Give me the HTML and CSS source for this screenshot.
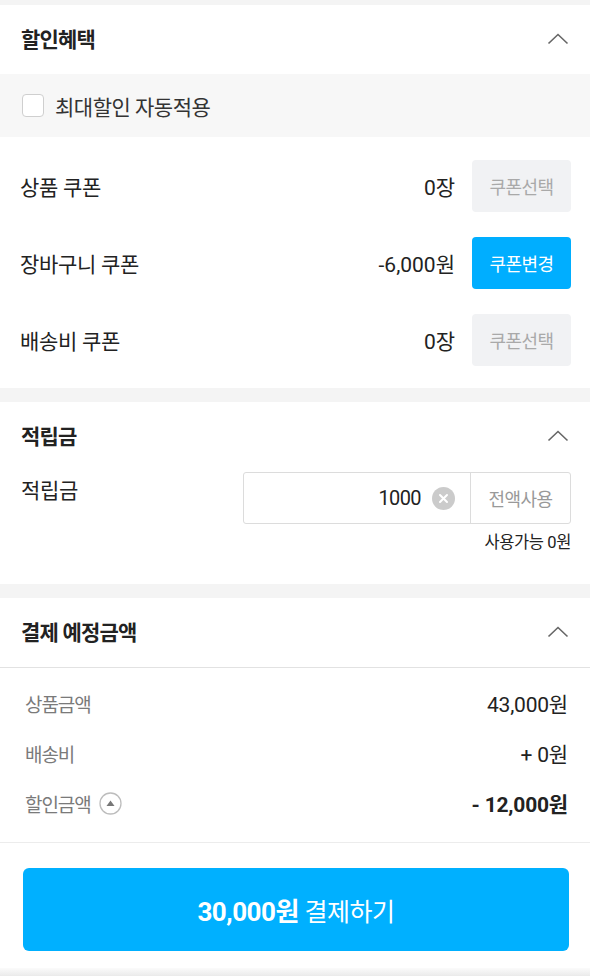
FILE: index.html
```html
<!DOCTYPE html>
<html lang="ko">
<head>
<meta charset="utf-8">
<link rel="stylesheet" href="styles.css">
</head>
<body>
<div class="page">
  <section class="card">
    <div class="sec-head">
      <h2 class="sec-title">할인혜택</h2>
      <svg class="chev" width="22" height="12" viewBox="0 0 22 12"><path d="M1.5 10.5 L11 1.5 L20.5 10.5" fill="none" stroke="#666" stroke-width="1.6"/></svg>
    </div>
    <label class="auto-row">
      <span class="checkbox"></span>
      <span class="auto-text">최대할인 자동적용</span>
    </label>
    <div class="coupons">
      <div class="coupon-row">
        <span class="row-label">상품 쿠폰</span>
        <span class="row-value">0장</span>
        <button class="cbtn">쿠폰선택</button>
      </div>
      <div class="coupon-row">
        <span class="row-label">장바구니 쿠폰</span>
        <span class="row-value">-6,000원</span>
        <button class="cbtn active">쿠폰변경</button>
      </div>
      <div class="coupon-row">
        <span class="row-label">배송비 쿠폰</span>
        <span class="row-value">0장</span>
        <button class="cbtn">쿠폰선택</button>
      </div>
    </div>
  </section>

  <section class="card points">
    <div class="sec-head">
      <h2 class="sec-title">적립금</h2>
      <svg class="chev" width="22" height="12" viewBox="0 0 22 12"><path d="M1.5 10.5 L11 1.5 L20.5 10.5" fill="none" stroke="#666" stroke-width="1.6"/></svg>
    </div>
    <div class="points-row">
      <span class="row-label points-label">적립금</span>
      <div class="points-right">
        <div class="point-input">
          <span class="point-val">1000</span>
          <span class="clear"><svg width="23" height="23" viewBox="0 0 23 23"><circle cx="11.5" cy="11.5" r="11.5" fill="#cbcbcb"/><path d="M8 8 L15 15 M15 8 L8 15" stroke="#fff" stroke-width="2" stroke-linecap="round"/></svg></span>
          <span class="use-all">전액사용</span>
        </div>
        <div class="avail">사용가능 0원</div>
      </div>
    </div>
  </section>

  <section class="card summary">
    <div class="sec-head bordered">
      <h2 class="sec-title">결제 예정금액</h2>
      <svg class="chev" width="22" height="12" viewBox="0 0 22 12"><path d="M1.5 10.5 L11 1.5 L20.5 10.5" fill="none" stroke="#666" stroke-width="1.6"/></svg>
    </div>
    <div class="sum-list">
      <div class="sum-row"><span class="sum-label">상품금액</span><span class="sum-val">43,000원</span></div>
      <div class="sum-row"><span class="sum-label">배송비</span><span class="sum-val">+ 0원</span></div>
      <div class="sum-row"><span class="sum-label">할인금액<svg class="tri" width="23" height="23" viewBox="0 0 23 23"><circle cx="11.5" cy="11.5" r="10.5" fill="#fff" stroke="#bdbdbd" stroke-width="1.3"/><path d="M7.5 14 L11.5 8.5 L15.5 14 Z" fill="#777"/></svg></span><span class="sum-val bold">- 12,000원</span></div>
    </div>
  </section>

  <footer class="pay-bar">
    <button class="pay-btn"><b>30,000원</b> 결제하기</button>
  </footer>
  <div class="bottom-shade"></div>
</div>
</body>
</html>
```

FILE: styles.css
```css
* { box-sizing: border-box; }
html, body { margin: 0; padding: 0; }
body {
  background: #f4f4f4;
  font-family: "Roboto", "Noto Sans CJK KR", "Noto Sans", sans-serif;
  color: #222;
  width: 590px;
  height: 976px;
  overflow: hidden;
}
.page {
  padding-top: 5px;
  display: flex;
  flex-direction: column;
  gap: 14px;
}
.card { background: #fff; }
.sec-head {
  height: 69px;
  display: flex;
  align-items: center;
  justify-content: space-between;
  padding: 0 21px 0 21px;
}
.sec-head.bordered { border-bottom: 1.5px solid #e2e2e2; height: 70px; }
.sec-title {
  margin: 0;
  font-size: 21px;
  font-weight: 700;
  letter-spacing: -0.8px;
  color: #222;
  line-height: 26px;
}
.chev { margin-top: -2px; }

.auto-row {
  display: flex;
  align-items: center;
  height: 63px;
  background: #f7f7f7;
  padding-left: 22px;
  gap: 11px;
}
.checkbox {
  width: 22px;
  height: 23px;
  border: 1.5px solid #cfcfcf;
  border-radius: 4px;
  background: #fff;
}
.auto-text {
  font-size: 21px;
  letter-spacing: -0.5px;
  color: #333;
}

.coupons {
  padding: 23px 19px 22px 20px;
  display: flex;
  flex-direction: column;
  gap: 25px;
}
.coupon-row {
  display: flex;
  align-items: center;
  height: 52px;
}
.row-label {
  font-size: 21px;
  letter-spacing: -0.3px;
  color: #222;
  flex: 1;
}
.row-value {
  font-size: 21px;
  letter-spacing: 0;
  color: #222;
  margin-right: 17px;
}
.cbtn {
  width: 99px;
  height: 52px;
  border: 0;
  border-radius: 4px;
  background: #f1f2f4;
  color: #a9a9a9;
  font-family: inherit;
  font-size: 18px;
  letter-spacing: -0.5px;
  padding: 0;
}
.cbtn.active { background: #00aeff; color: #fff; }

.points .sec-head { height: 70px; }
.points-row {
  display: flex;
  padding: 0 19px 30px 21px;
}
.points-label { padding-top: 5px; line-height: 28px; }
.points-right { display: flex; flex-direction: column; align-items: flex-end; }
.point-input {
  width: 328px;
  height: 52px;
  border: 1.5px solid #dcdcdc;
  border-radius: 3px;
  display: flex;
  align-items: center;
}
.point-val {
  flex: 1;
  text-align: right;
  font-size: 20px;
  letter-spacing: -0.6px;
  color: #222;
}
.clear { display: flex; margin: 0 15px 0 11px; }
.use-all {
  width: 100px;
  height: 100%;
  border-left: 1.5px solid #dcdcdc;
  display: flex;
  align-items: center;
  justify-content: center;
  font-size: 18px;
  letter-spacing: -0.5px;
  color: #999;
}
.avail {
  margin-top: 8px;
  font-size: 16.5px;
  letter-spacing: -0.4px;
  color: #222;
  line-height: 22px;
}

.sum-list {
  padding: 10px 22px 14px 25px;
  border-bottom: 1.5px solid #ececec;
}
.sum-row {
  height: 50px;
  display: flex;
  align-items: center;
  justify-content: space-between;
}
.sum-label {
  font-size: 19px;
  letter-spacing: -1.1px;
  color: #7a7a7a;
  display: flex;
  align-items: center;
  gap: 8px;
}
.sum-val {
  font-size: 21px;
  letter-spacing: -0.2px;
  color: #222;
}
.sum-val.bold { font-weight: 700; }

.pay-bar {
  background: #fff;
  margin-top: -14px;
  padding: 25px 21px 17px 23px;
}
.pay-btn {
  width: 100%;
  height: 83px;
  border: 0;
  border-radius: 6px;
  background: #00b0ff;
  color: #fff;
  font-family: inherit;
  font-size: 25px;
  letter-spacing: -0.5px;
  padding: 0;
}
.pay-btn b { font-weight: 700; font-size: 26px; }
.bottom-shade {
  margin-top: -14px;
  height: 10px;
  background: linear-gradient(#fbfbfb, #e6e6e6);
}
```
